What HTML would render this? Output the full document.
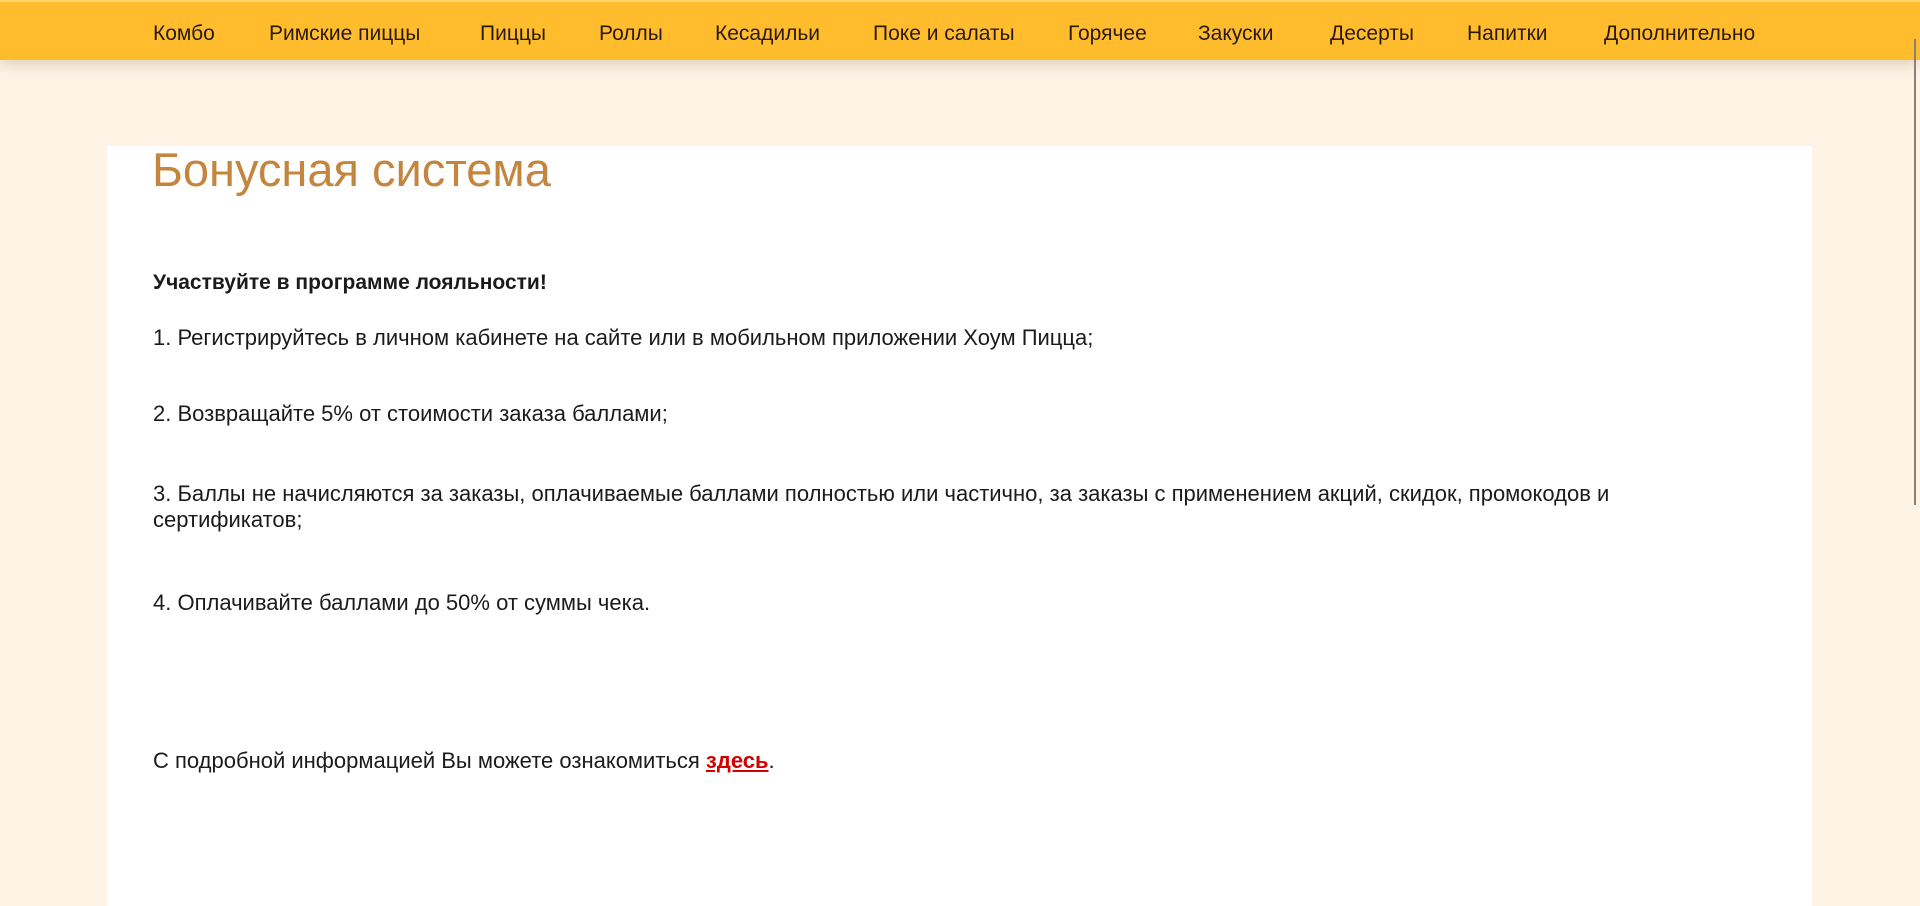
<!DOCTYPE html>
<html><head><meta charset="utf-8"><style>
html,body{margin:0;padding:0;}
body{width:1920px;height:860px;overflow:hidden;background:#fef4e6;font-family:"Liberation Sans","DejaVu Sans",sans-serif;position:relative;}
.nav{position:absolute;left:0;top:0;width:1920px;height:60px;background:#ffbd2e;border-top:2px solid #ffd36b;box-sizing:border-box;box-shadow:0 4px 14px rgba(120,90,40,0.25);}
.nav span{position:absolute;top:20px;font-size:21px;color:#2a1a0e;white-space:nowrap;}
.card{position:absolute;left:107px;top:146px;width:1705px;height:760px;background:#fff;}
.t{position:absolute;left:153px;white-space:nowrap;color:#1b1b1b;font-size:22px;}
h1{position:absolute;left:152px;top:142px;margin:0;font-weight:normal;font-size:47px;color:#c4853e;white-space:nowrap;}
a{color:#d40000;font-weight:bold;text-decoration:underline;}
.sb{position:absolute;left:1914px;top:39px;width:2px;height:466px;background:#8a8078;}
</style></head><body>
<div class="nav">
<span style="left:153px">Комбо</span>
<span style="left:269px">Римские пиццы</span>
<span style="left:480px">Пиццы</span>
<span style="left:599px">Роллы</span>
<span style="left:715px">Кесадильи</span>
<span style="left:873px">Поке и салаты</span>
<span style="left:1068px">Горячее</span>
<span style="left:1198px">Закуски</span>
<span style="left:1330px">Десерты</span>
<span style="left:1467px">Напитки</span>
<span style="left:1604px">Дополнительно</span>
</div>
<div class="sb"></div>
<div class="card"></div>
<h1>Бонусная система</h1>
<div class="t" style="top:271px;font-weight:bold;font-size:21px">Участвуйте в программе лояльности!</div>
<div class="t" style="top:325px">1. Регистрируйтесь в личном кабинете на сайте или в мобильном приложении Хоум Пицца;</div>
<div class="t" style="top:401px">2. Возвращайте 5% от стоимости заказа баллами;</div>
<div class="t" style="top:481px">3. Баллы не начисляются за заказы, оплачиваемые баллами полностью или частично, за заказы с применением акций, скидок, промокодов и</div>
<div class="t" style="top:507px">сертификатов;</div>
<div class="t" style="top:590px">4. Оплачивайте баллами до 50% от суммы чека.</div>
<div class="t" style="top:748px">С подробной информацией Вы можете ознакомиться <a>здесь</a>.</div>
</body></html>
